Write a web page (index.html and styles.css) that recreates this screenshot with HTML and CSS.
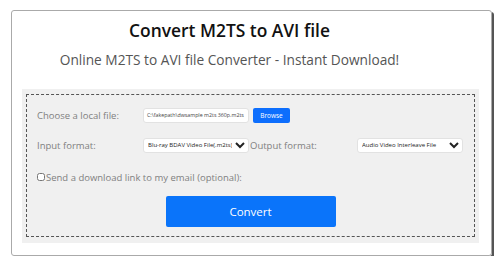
FILE: index.html
```html
<!DOCTYPE html>
<html lang="en">
<head>
    <meta charset="UTF-8">
    <meta name="viewport" content="width=device-width, initial-scale=1.0">
    <title>Convert M2TS to AVI file</title>
    <link rel="stylesheet" href="styles.css">
</head>
<body>
    <div class="card">
        <div class="header">
            <h1>Convert M2TS to AVI file</h1>
            <p>Online M2TS to AVI file Converter - Instant Download!</p>
        </div>

        <div class="panel">
            <div class="dashed">
                <div class="row">
                    <label class="label">Choose a local file:</label>
                    <span class="file-box">C:\fakepath\dwsample m2ts 360p.m2ts</span>
                    <button class="browse">Browse</button>
                </div>
                <div class="row">
                    <label class="label">Input format:</label>
                    <select class="select">
                        <option>Blu-ray BDAV Video File(.m2ts)</option>
                    </select>
                    <label class="label out-label">Output format:</label>
                    <select class="select">
                        <option>Audio Video Interleave File</option>
                    </select>
                </div>
                <div class="row check-row">
                    <input type="checkbox" class="check">
                    <label class="label">Send a download link to my email (optional):</label>
                </div>
                <div class="actions">
                    <button class="convert">Convert</button>
                </div>
            </div>
        </div>
    </div>
</body>
</html>
```

FILE: styles.css
```css
* {
    margin: 0;
    padding: 0;
    box-sizing: border-box;
}
body {
    font-family: 'Open Sans', sans-serif;
    background-color: #fff;
    padding: 10px 8px 0 11px;
}
.card {
    width: 481px;
    height: 246px;
    border: 1px solid #aaa;
    border-radius: 3px;
    box-shadow: 2px 2px 0 #555;
    padding: 9px 12px 0 10px;
}
.header {
    text-align: center;
    padding-right: 42px;
}
h1 {
    font-size: 17.4px;
    font-weight: 600;
    color: #111;
    line-height: 22px;
    margin-top: -1px;
}
p {
    font-size: 13.7px;
    color: #555;
    line-height: 20px;
    margin-top: 9px;
}
.panel {
    background-color: #f0f0f0;
    margin-top: 19px;
    padding: 5px 4px 6px 4px;
}
.dashed {
    border: 1px dashed #555;
    padding: 5px 10px 8px 10px;
    height: 143px;
}
.row {
    display: flex;
    align-items: center;
    height: 30px;
}
.label {
    font-size: 9.5px;
    color: #808080;
    width: 106px;
}
.file-box {
    width: 106px;
    height: 15px;
    background-color: #fff;
    border: 1px solid #e2e2e2;
    border-radius: 3px;
    font-size: 5.3px;
    color: #444;
    padding: 0 3px;
    line-height: 13px;
    white-space: nowrap;
    overflow: hidden;
}
.browse {
    margin-left: 4px;
    width: 37px;
    height: 15px;
    background-color: #0d6efd;
    color: #fff;
    border: none;
    border-radius: 2px;
    font-family: 'Open Sans', sans-serif;
    font-size: 6.5px;
}
.select {
    width: 106px;
    height: 15px;
    font-family: 'Open Sans', sans-serif;
    font-size: 6px;
    border: 1px solid #e2e2e2;
    border-radius: 3px;
    background-color: #fff;
    color: #222;
}
.out-label {
    width: 107px;
    margin-left: 1px;
}
.check-row {
    height: 32px;
    padding-top: 2px;
}
.check-row .label {
    width: auto;
}
.check {
    width: 8px;
    height: 8px;
    margin-right: 1px;
}
.actions {
    display: flex;
    justify-content: center;
    margin-top: 4px;
}
.convert {
    width: 170px;
    height: 31px;
    background-color: #0a74fa;
    color: #fff;
    border: none;
    border-radius: 2px;
    font-family: 'Open Sans', sans-serif;
    font-size: 11.5px;
}
```
